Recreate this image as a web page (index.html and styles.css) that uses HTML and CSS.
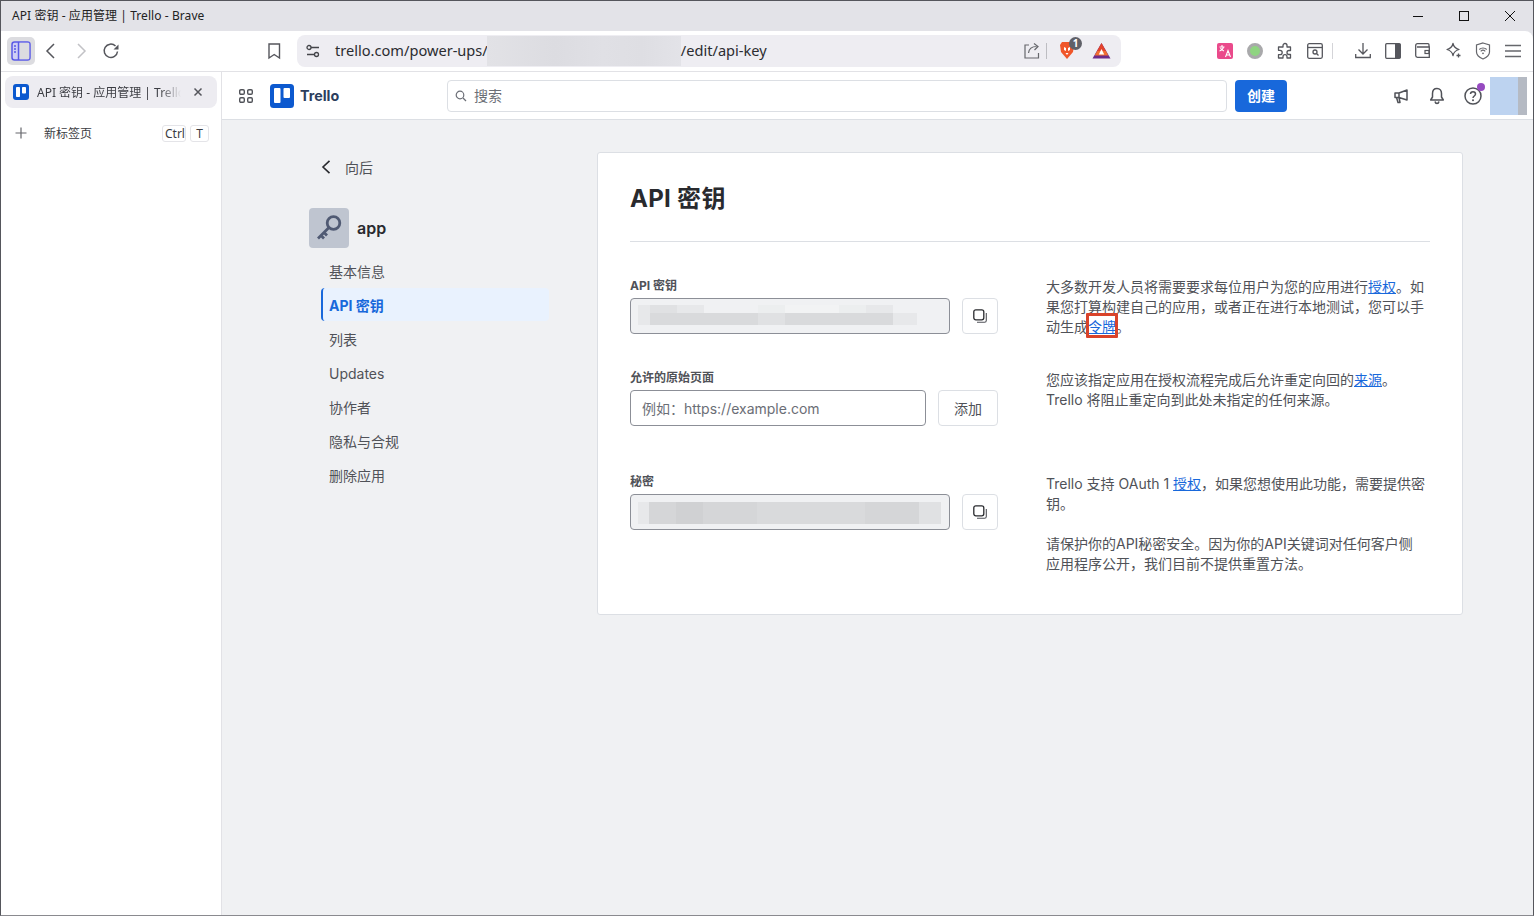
FILE: index.html
```html
<!DOCTYPE html>
<html lang="zh-CN">
<head>
  <meta charset="UTF-8">
  <title>API 密钥 - 应用管理 | Trello - Brave</title>
  <link rel="stylesheet" href="styles.css">
</head>
<body>
  <div class="window">
    <div class="titlebar">
      <span class="title">API 密钥 - 应用管理 | Trello - Brave</span>
      <div class="win-controls">
        <span class="win-btn"><svg width="12" height="12" viewBox="0 0 12 12"><path d="M1 6.500h10" stroke="#111" fill="none"/></svg></span>
        <span class="win-btn"><svg width="12" height="12" viewBox="0 0 12 12"><rect x="1.500" y="1.500" width="9" height="9" stroke="#111" fill="none"/></svg></span>
        <span class="win-btn"><svg width="12" height="12" viewBox="0 0 12 12"><path d="M1 1l10 10M11 1L1 11" stroke="#111" fill="none"/></svg></span>
      </div>
    </div>

    <div class="toolbar">
      <span class="side-toggle">
        <svg width="20" height="20" viewBox="0 0 20 20"><rect x="1" y="1" width="18" height="18" rx="2.500" fill="#cfcff5" stroke="#5a5ae6" stroke-width="1.500"/><rect x="8.500" y="1.800" width="9.700" height="16.400" fill="#dcdce0"/><path d="M7.500 1v18" stroke="#5a5ae6" stroke-width="1.500"/><path d="M3 5h2M3 8h2M3 11h2" stroke="#5a5ae6" stroke-width="1.500"/></svg>
      </span>
      <span class="slot slot-first"><svg width="16" height="18" viewBox="0 0 16 18"><path d="M11 2L4 9l7 7" fill="none" stroke="#55565c" stroke-width="1.500"/></svg></span>
      <span class="slot"><svg width="16" height="18" viewBox="0 0 16 18"><path d="M5 2l7 7-7 7" fill="none" stroke="#c2c2c6" stroke-width="1.500"/></svg></span>
      <span class="slot"><svg width="18" height="18" viewBox="0 0 18 18"><path d="M15.500 9.500A6.700 6.700 0 1 1 13.500 4" fill="none" stroke="#55565c" stroke-width="1.500"/><path d="M16.500 2.500v5h-5z" fill="#55565c"/></svg></span>
      <span class="slot slot-bookmark"><svg width="14" height="18" viewBox="0 0 14 18"><path d="M2 2h10.500v14L7.200 12.500 2 16z" fill="none" stroke="#55565c" stroke-width="1.400"/></svg></span>

      <div class="urlbar">
        <svg class="url-tune" width="14" height="14" viewBox="0 0 14 14"><circle cx="3" cy="3.500" r="2" fill="none" stroke="#44454a" stroke-width="1.300"/><path d="M5 3.500h8M1 10.500h7" stroke="#44454a" stroke-width="1.300"/><circle cx="10.500" cy="10.500" r="2" fill="none" stroke="#44454a" stroke-width="1.300"/></svg>
        <span class="url-text">trello.com/power-ups/</span>
        <span class="url-blur"></span>
        <span class="url-text">/edit/api-key</span>
        <svg class="url-share" width="18" height="18" viewBox="0 0 18 18"><path d="M6 2.500H2v13h13.500v-5" fill="none" stroke="#66676c" stroke-width="1.200" transform="translate(0 .5)"/><path d="M5.500 11c.5-4 3.500-6.500 8-6.500M11 1.500l4 3-3.500 3.500" fill="none" stroke="#66676c" stroke-width="1.200"/></svg>
        <span class="url-sep"></span>
        <span class="brave-lion">
          <svg width="16" height="19" viewBox="0 0 16 19"><path d="M3 1h10l2 3-1 7-6 7-6-7-1-7z" fill="#f0562a"/><path d="M5 6l2 1v3l-2-1zM11 6L9 7v3l2-1zM6.500 12h3L8 14z" fill="#fff"/></svg>
          <span class="brave-badge">1</span>
        </span>
        <svg class="bat" width="19" height="17" viewBox="0 0 19 17"><path d="M9.500 1L18.500 16.500H.5z" fill="#6c2b8a"/><path d="M9.500 1l4.500 8H5z" fill="#e3432b"/><path d="M5 9h9l2.300 4.500H2.700z" fill="#f36e30"/><path d="M9.500 7l2.700 5.500H6.800z" fill="#fff"/></svg>
      </div>

      <span class="slot slot-ext"><svg width="16" height="16" viewBox="0 0 16 16"><rect width="16" height="16" rx="2" fill="#ea4a8b"/><path d="M2.500 4h5M5 2v2M6.500 4c-.4 2-1.800 3.300-4 4M3.500 5c.7 1.500 2 2.500 3.500 3M8.500 14l2.500-6.500 2.500 6.500M9.400 12h3.200" fill="none" stroke="#fff" stroke-width="1.100"/></svg></span>
      <span class="slot"><span class="status-dot"></span></span>
      <span class="slot"><svg width="18" height="18" viewBox="0 0 18 18"><path d="M7 3.500a2 2 0 0 1 4 0V5h3.500v3.500H13a2 2 0 0 0 0 4h1.500V16H11v-1.300a2 2 0 0 0-4 0V16H2.500v-3.300H4a2.200 2.200 0 0 0 0-4.400H2.500V5H7z" fill="none" stroke="#55565c" stroke-width="1.300" stroke-linejoin="round"/></svg></span>
      <span class="slot"><svg width="16" height="16" viewBox="0 0 16 16"><rect x=".7" y=".7" width="14.600" height="14.600" rx="1.500" fill="none" stroke="#55565c" stroke-width="1.300"/><path d="M1 4.500h14" stroke="#55565c" stroke-width="1.300"/><circle cx="8" cy="9" r="2" fill="none" stroke="#55565c" stroke-width="1.300"/><path d="M9.500 10.500l2 2" stroke="#55565c" stroke-width="1.300"/></svg></span>
      <span class="tool-sep"></span>
      <span class="slot"><svg width="16" height="17" viewBox="0 0 16 17"><path d="M8 1v11M3.500 7.500L8 12l4.500-4.500M.7 12v3.500h14.600V12" fill="none" stroke="#55565c" stroke-width="1.300"/></svg></span>
      <span class="slot"><svg width="16" height="16" viewBox="0 0 16 16"><rect x=".7" y=".7" width="14.600" height="14.600" rx="1" fill="none" stroke="#55565c" stroke-width="1.300"/><rect x="10" y="1" width="5.500" height="14" fill="#55565c"/></svg></span>
      <span class="slot"><svg width="16" height="15" viewBox="0 0 16 15"><path d="M14 4V1.700Q14 .7 13 .7H2.500Q.7 .7 .7 2.500v10Q.7 14.300 2.500 14.300h11.800V4H2" fill="none" stroke="#55565c" stroke-width="1.300"/><rect x="10" y="7.500" width="4" height="3" fill="none" stroke="#55565c" stroke-width="1.200"/></svg></span>
      <span class="slot"><svg width="17" height="17" viewBox="0 0 17 17"><path d="M8 1.500c.6 3 2.500 5 6 6-3.500 1-5.400 3-6 6-.6-3-2.500-5-6-6 3.500-1 5.400-3 6-6z" fill="none" stroke="#55565c" stroke-width="1.300" stroke-linejoin="round"/><path d="M13.500 11.500v4M11.500 13.500h4" stroke="#55565c" stroke-width="1.300"/></svg></span>
      <span class="slot"><svg width="16" height="18" viewBox="0 0 16 18"><path d="M8 1l6.500 2v7c0 3.500-3 5.500-6.500 7-3.500-1.500-6.500-3.500-6.500-7V3z" fill="none" stroke="#66676c" stroke-width="1.200"/><path d="M4.300 7.500a5.300 5.300 0 0 1 7.400 0M5.700 9.300a3.300 3.300 0 0 1 4.600 0" fill="none" stroke="#66676c" stroke-width="1.100"/><circle cx="8" cy="11.300" r=".9" fill="#66676c"/></svg></span>
      <span class="slot"><svg width="16" height="14" viewBox="0 0 16 14"><path d="M0 1.500h16M0 7h16M0 12.500h16" stroke="#66676c" stroke-width="1.600"/></svg></span>
    </div>

    <div class="content">
      <aside class="sidebar">
        <div class="tab">
          <svg class="fav" width="16" height="16" viewBox="0 0 16 16"><rect width="16" height="16" rx="3" fill="#0c59cf"/><rect x="3" y="3" width="4" height="10" rx=".8" fill="#fff"/><rect x="9" y="3" width="4" height="6.500" rx=".8" fill="#fff"/></svg>
          <span class="tab-text">API 密钥 - 应用管理 | Trello</span>
          <svg class="tab-close" width="10" height="10" viewBox="0 0 10 10"><path d="M1.500 1.500l7 7M8.500 1.500l-7 7" stroke="#55565c" stroke-width="1.500"/></svg>
        </div>
        <div class="newtab">
          <svg width="12" height="12" viewBox="0 0 12 12"><path d="M6 .5v11M.5 6h11" stroke="#66676c" stroke-width="1.200"/></svg>
          <span class="newtab-text">新标签页</span>
          <kbd class="key key-ctrl">Ctrl</kbd>
          <kbd class="key">T</kbd>
        </div>
      </aside>

      <div class="app">
        <header class="app-header">
          <svg class="apps" width="14" height="14" viewBox="0 0 14 14"><g fill="none" stroke="#505258" stroke-width="1.400"><rect x=".7" y=".7" width="4.600" height="4.600" rx="1.200"/><rect x="8.700" y=".7" width="4.600" height="4.600" rx="1.200"/><rect x=".7" y="8.700" width="4.600" height="4.600" rx="1.200"/><rect x="8.700" y="8.700" width="4.600" height="4.600" rx="1.200"/></g></svg>
          <svg class="logo" width="24" height="24" viewBox="0 0 24 24"><rect width="24" height="24" rx="3.500" fill="#0c59cf"/><rect x="4" y="4" width="6.500" height="15" rx="1" fill="#fff"/><rect x="13.500" y="4" width="6.500" height="10" rx="1" fill="#fff"/></svg>
          <span class="brand">Trello</span>
          <label class="search">
            <svg width="12" height="12" viewBox="0 0 12 12"><circle cx="5" cy="5" r="3.800" fill="none" stroke="#6b6e76" stroke-width="1.200"/><path d="M8 8l3 3" stroke="#6b6e76" stroke-width="1.200"/></svg>
            <input type="text" placeholder="搜索">
          </label>
          <button class="create">创建</button>
          <span class="head-icon head-first"><svg width="16" height="16" viewBox="0 0 16 16"><path d="M14 2v10L6 9.500H2V5h4zM6 5v4.500M3.500 9.500L5 14.500h2l-1-5" fill="none" stroke="#505258" stroke-width="1.500" stroke-linejoin="round"/></svg></span>
          <span class="head-icon"><svg width="16" height="18" viewBox="0 0 16 18"><path d="M8 1.500c-3 0-4.500 2.200-4.500 5V10L1.700 13h12.600l-1.800-3V6.500c0-2.800-1.500-5-4.500-5zM6 14.500c.3 1.300 1 2 2 2s1.700-.7 2-2" fill="none" stroke="#505258" stroke-width="1.500" stroke-linejoin="round"/></svg></span>
          <span class="head-icon help">
            <svg width="18" height="18" viewBox="0 0 18 18"><circle cx="9" cy="9" r="8" fill="none" stroke="#505258" stroke-width="1.500"/><path d="M6.500 7c0-1.500 1-2.300 2.500-2.300S11.500 5.600 11.500 7c0 2-2.500 2-2.500 4" fill="none" stroke="#505258" stroke-width="1.500"/><circle cx="9" cy="13.300" r="1" fill="#505258"/></svg>
            <span class="help-dot"></span>
          </span>
          <span class="avatar"></span>
        </header>

        <main class="page">
          <nav class="side-nav">
            <a class="back">
              <svg width="10" height="14" viewBox="0 0 10 14"><path d="M8.500 .8L2 7l6.500 6.200" fill="none" stroke="#292a2e" stroke-width="1.600"/></svg>
              <span>向后</span>
            </a>
            <div class="app-title">
              <span class="app-icon">
                <svg width="28" height="28" viewBox="0 0 28 28"><circle cx="18.500" cy="9" r="6.300" fill="none" stroke="#505a73" stroke-width="2.800"/><path d="M14 13.500L3 24.500M5.500 21l3.500 3.500M8.500 18l3.500 3.500" fill="none" stroke="#505a73" stroke-width="2.800"/></svg>
              </span>
              <span class="app-name">app</span>
            </div>
            <ul class="menu">
              <li>基本信息</li>
              <li class="active">API 密钥</li>
              <li>列表</li>
              <li>Updates</li>
              <li>协作者</li>
              <li>隐私与合规</li>
              <li>删除应用</li>
            </ul>
          </nav>

          <section class="card">
            <h1>API 密钥</h1>
            <hr>

            <div class="row row-key">
              <div class="fields">
                <label class="field-label">API 密钥</label>
                <div class="field-line">
                  <div class="readonly">
                    <div class="mosaic mosaic-key">
                      <i class="s2"></i><i class="s3"></i><i class="s2"></i><i></i><i></i><i class="s1"></i><i class="s0"></i><i class="s0"></i><i class="s1"></i><i class="s2"></i><i></i>
                      <i class="s2"></i><i class="s4"></i><i class="s4"></i><i class="s4"></i><i class="s4"></i><i class="s3"></i><i class="s4"></i><i class="s4"></i><i class="s4"></i><i class="s4"></i><i class="s2"></i>
                    </div>
                  </div>
                  <button class="icon-btn"><svg width="14" height="14" viewBox="0 0 14 14"><rect x=".8" y=".8" width="10" height="10" rx="2" fill="none" stroke="#292a2e" stroke-width="1.300"/><path d="M13.300 4v7.500a1.800 1.800 0 0 1-1.800 1.800H4" fill="none" stroke="#505258" stroke-width="1.100"/></svg></button>
                </div>
              </div>
              <p class="help-text">大多数开发人员将需要要求每位用户为您的应用进行<a>授权</a>。如果您打算构建自己的应用，或者正在进行本地测试，您可以手动生成<a class="marked">令牌</a>。</p>
            </div>

            <div class="row row-origin">
              <div class="fields">
                <label class="field-label">允许的原始页面</label>
                <div class="field-line">
                  <input class="origin" type="text" placeholder="例如：https://example.com">
                  <button class="add-btn">添加</button>
                </div>
              </div>
              <p class="help-text">您应该指定应用在授权流程完成后允许重定向回的<a>来源</a>。Trello 将阻止重定向到此处未指定的任何来源。</p>
            </div>

            <div class="row row-secret">
              <div class="fields">
                <label class="field-label">秘密</label>
                <div class="field-line">
                  <div class="readonly">
                    <div class="mosaic mosaic-secret">
                      <i class="s2"></i><i class="s5"></i><i class="s6"></i><i class="s5"></i><i class="s5"></i><i class="s4"></i><i class="s4"></i><i class="s4"></i><i class="s4"></i><i class="s5"></i><i class="s5"></i><i class="s3"></i>
                    </div>
                  </div>
                  <button class="icon-btn"><svg width="14" height="14" viewBox="0 0 14 14"><rect x=".8" y=".8" width="10" height="10" rx="2" fill="none" stroke="#292a2e" stroke-width="1.300"/><path d="M13.300 4v7.500a1.800 1.800 0 0 1-1.800 1.800H4" fill="none" stroke="#505258" stroke-width="1.100"/></svg></button>
                </div>
              </div>
              <div class="help-col">
                <p class="help-text">Trello 支持 OAuth 1 <a>授权</a>，如果您想使用此功能，需要提供密钥。</p>
                <p class="help-text">请保护你的API秘密安全。因为你的API关键词对任何客户侧应用程序公开，我们目前不提供重置方法。</p>
              </div>
            </div>
          </section>
        </main>
      </div>
    </div>
  </div>
</body>
</html>
```

FILE: styles.css
```css
* {
  box-sizing: border-box;
}
html, body {
  margin: 0;
  height: 100%;
  overflow: hidden;
}
body {
  font-family: Inter, "Noto Sans CJK SC", sans-serif;
  font-size: 14px;
  color: #292a2e;
}
svg {
  display: block;
  flex: none;
}

/* browser frame */
.window {
  height: 916px;
  display: flex;
  flex-direction: column;
  border: 1px solid #55565c;
  border-bottom-color: #8a8a8f;
  background: #e3e3e8;
}
.titlebar {
  height: 30px;
  flex: none;
  display: flex;
  align-items: center;
  padding-left: 11px;
}
.title {
  font-family: "Noto Sans", "Noto Sans CJK SC", sans-serif;
  font-size: 12px;
  letter-spacing: .07px;
  margin-top: -2px;
  color: #222;
}
.win-controls {
  margin-left: auto;
  display: flex;
}
.win-btn {
  width: 46px;
  height: 30px;
  display: flex;
  align-items: center;
  justify-content: center;
}
.toolbar {
  height: 41px;
  flex: none;
  display: flex;
  align-items: center;
  padding: 0 0 1px 6px;
  background: #fff;
  border-radius: 0 8px 0 0;
  border-bottom: 1px solid #e2e2e6;
}
.side-toggle {
  width: 28px;
  height: 28px;
  display: flex;
  align-items: center;
  justify-content: center;
  background: #dcdce0;
  border-radius: 5px;
}
.slot {
  width: 30px;
  height: 30px;
  flex: none;
  display: flex;
  align-items: center;
  justify-content: center;
}
.slot-first {
  margin-left: 1px;
}
.slot-bookmark {
  margin-left: 133px;
}
.slot-ext {
  margin-left: 89px;
}
.urlbar {
  width: 824px;
  height: 32px;
  margin-left: 8px;
  display: flex;
  align-items: center;
  flex: none;
  background: #eeedf2;
  border-radius: 8px;
  font-family: "Noto Sans", sans-serif;
  font-size: 14.600px;
  color: #2b2c30;
}
.url-text {
  margin-top: -2px;
}
.url-tune {
  margin: 0 15px 0 9px;
}
.url-blur {
  width: 194px;
  height: 30px;
  margin-left: -1px;
  background: linear-gradient(90deg, #e2e2e6, #dcdce1 35%, #e0e0e5 60%, #dedee3 80%, #e3e3e8);
}
.url-share {
  margin-left: auto;
}
.url-sep {
  width: 1px;
  height: 16px;
  margin: 0 12px 0 5px;
  background: #bdbdc2;
}
.brave-lion {
  position: relative;
}
.brave-badge {
  position: absolute;
  left: 10px;
  top: -4px;
  width: 13px;
  height: 13px;
  border-radius: 50%;
  background: #5f6068;
  color: #fff;
  font-size: 10px;
  font-weight: 700;
  line-height: 13px;
  text-align: center;
}
.bat {
  margin: 0 10px 0 17px;
}
.status-dot {
  width: 16px;
  height: 16px;
  border-radius: 50%;
  background: #8fd481;
  border: 3px solid #a9a9ab;
}
.tool-sep {
  width: 1px;
  height: 16px;
  margin: 0 15px 0 2px;
  background: #d4d4d8;
}

.content {
  flex: 1;
  display: flex;
  min-height: 0;
  background: #fff;
}

/* vertical tabs */
.sidebar {
  width: 221px;
  flex: none;
  padding: 4px 4px 0;
  border-right: 1px solid #e2e2e6;
  font-family: "Noto Sans", "Noto Sans CJK SC", sans-serif;
  color: #3b3c42;
}
.tab {
  height: 32px;
  width: 212px;
  display: flex;
  align-items: center;
  padding-left: 8px;
  background: #edecf1;
  border-radius: 8px;
  font-size: 12px;
}
.tab-text {
  width: 144px;
  margin-left: 8px;
  overflow: hidden;
  white-space: nowrap;
  -webkit-mask-image: linear-gradient(90deg, #000 85%, transparent);
  mask-image: linear-gradient(90deg, #000 85%, transparent);
}
.tab-close {
  margin-left: 12px;
}
.newtab {
  display: flex;
  align-items: center;
  height: 26px;
  margin-top: 12px;
  padding-left: 10px;
  font-size: 12px;
}
.newtab-text {
  width: 118px;
  margin-left: 17px;
}
.key {
  height: 17px;
  min-width: 19px;
  padding: 0 2px;
  margin-right: 4px;
  border: 1px solid #e4e4e8;
  border-radius: 3px;
  font-family: inherit;
  font-size: 12px;
  line-height: 15px;
  text-align: center;
}
.key-ctrl {
  width: 24px;
}

/* trello */
.app {
  flex: 1;
  min-width: 0;
  display: flex;
  flex-direction: column;
}
.app-header {
  height: 48px;
  flex: none;
  display: flex;
  align-items: center;
  border-bottom: 1px solid #dcdfe4;
  padding-left: 17px;
}
.logo {
  margin-left: 17px;
}
.brand {
  width: 147px;
  margin-left: 6px;
  font-weight: 700;
  font-size: 14.300px;
  color: #2c3e5d;
}
.search {
  width: 780px;
  height: 32px;
  display: flex;
  align-items: center;
  gap: 7px;
  padding-left: 7px;
  border: 1px solid #dcdfe4;
  border-radius: 4px;
}
.search input {
  flex: 1;
  border: none;
  outline: none;
  padding: 0;
  font: inherit;
}
.search input::placeholder {
  color: #6b6e76;
}
.create {
  width: 52px;
  height: 32px;
  margin-left: 8px;
  padding: 0 0 2px;
  border: none;
  border-radius: 4px;
  background: #1868db;
  color: #fff;
  font: 600 14px Inter, "Noto Sans CJK SC", sans-serif;
}
.head-icon {
  width: 36px;
  height: 32px;
  display: flex;
  align-items: center;
  justify-content: center;
  flex: none;
}
.head-first {
  margin-left: 96px;
}
.help {
  position: relative;
}
.help-dot {
  position: absolute;
  top: 3px;
  left: 22px;
  width: 8px;
  height: 8px;
  border-radius: 50%;
  background: #964ac0;
}
.avatar {
  width: 37px;
  height: 38px;
  margin-left: -1px;
  background: linear-gradient(90deg, #bdd3f0 76%, #b5bac3 76%);
}

.page {
  flex: 1;
  display: flex;
  align-items: flex-start;
  gap: 48px;
  padding: 32px 0 0 87px;
  background: #f0f1f3;
}
.side-nav {
  width: 240px;
  flex: none;
}
.back {
  display: flex;
  align-items: center;
  gap: 14px;
  height: 30px;
  padding-left: 12px;
  color: #505258;
}
.app-title {
  display: flex;
  align-items: center;
  gap: 8px;
  margin-top: 26px;
}
.app-icon {
  width: 40px;
  height: 40px;
  display: flex;
  align-items: center;
  justify-content: center;
  background: #bfc5d0;
  border-radius: 4px;
}
.app-name {
  font-size: 16px;
  font-weight: 600;
}
.menu {
  list-style: none;
  margin: 6px 0 0 12px;
  padding: 0;
}
.menu li {
  height: 34px;
  display: flex;
  align-items: center;
  padding-left: 8px;
  color: #505258;
}
.menu .active {
  height: 33px;
  margin-bottom: 1px;
  background: #e9f2fe;
  border-left: 2px solid #1868db;
  border-radius: 4px;
  padding-left: 6px;
  color: #1868db;
  font-weight: 700;
}

.card {
  width: 866px;
  height: 463px;
  flex: none;
  padding: 0 32px;
  background: #fff;
  border: 1px solid #dcdfe4;
  border-radius: 3px;
}
.card h1 {
  margin: 30px 0 0;
  font-size: 24px;
  line-height: 32px;
  font-weight: 700;
  letter-spacing: .3px;
}
.card hr {
  margin: 26px 0 0;
  border: none;
  border-top: 1px solid #dcdfe4;
}
.row {
  display: flex;
  gap: 48px;
}
.row-key {
  margin-top: 36px;
}
.row-origin {
  margin-top: 33px;
}
.row-secret {
  margin-top: 48px;
}
.fields {
  width: 368px;
  flex: none;
}
.field-label {
  display: block;
  height: 20px;
  font-size: 12px;
  line-height: 16px;
  font-weight: 700;
  color: #505258;
}
.field-line {
  display: flex;
  gap: 12px;
  height: 36px;
}
.readonly {
  flex: 1;
  padding-top: 6px;
  background: #f0f1f3;
  border: 1px solid #8c8f97;
  border-radius: 4px;
}
.mosaic {
  display: grid;
  margin-left: 7px;
}
.mosaic-key {
  grid-template-columns: 12px repeat(9, 27px) 24px;
  grid-template-rows: 8px 12px;
}
.mosaic-secret {
  grid-template-columns: 11px repeat(10, 27px) 22px;
  grid-template-rows: 22px;
  margin-top: 1px;
}
.s0 { background: #f2f3f4; }
.s1 { background: #eceeef; }
.s2 { background: #e7e8ea; }
.s3 { background: #e0e1e3; }
.s4 { background: #d9dadc; }
.s5 { background: #d5d6d8; }
.s6 { background: #d0d1d3; }
.icon-btn, .add-btn {
  display: flex;
  align-items: center;
  justify-content: center;
  width: 36px;
  height: 36px;
  padding: 0;
  background: #fff;
  border: 1px solid #dcdfe4;
  border-radius: 4px;
  color: #505258;
  font: 14px Inter, "Noto Sans CJK SC", sans-serif;
}
.add-btn {
  width: 60px;
}
.origin {
  flex: 1;
  min-width: 0;
  height: 36px;
  padding: 0 11px;
  border: 1px solid #8c8f97;
  border-radius: 4px;
  outline: none;
  color: #292a2e;
  font: 14px Inter, "Noto Sans CJK SC", sans-serif;
}
.origin::placeholder {
  color: #6b6e76;
}
.help-text {
  width: 380px;
  margin: 0;
  line-height: 20px;
  color: #505258;
}
.row-key .help-text {
  margin-top: -1px;
}
.help-text a {
  color: #1868db;
  text-decoration: underline;
}
.help-col .help-text + .help-text {
  margin-top: 20px;
}
.marked {
  position: relative;
}
.marked::after {
  content: "";
  position: absolute;
  left: -2px;
  right: -2px;
  top: -5px;
  bottom: -3px;
  border: 3px solid #d9432a;
  border-radius: 1px;
}
```
